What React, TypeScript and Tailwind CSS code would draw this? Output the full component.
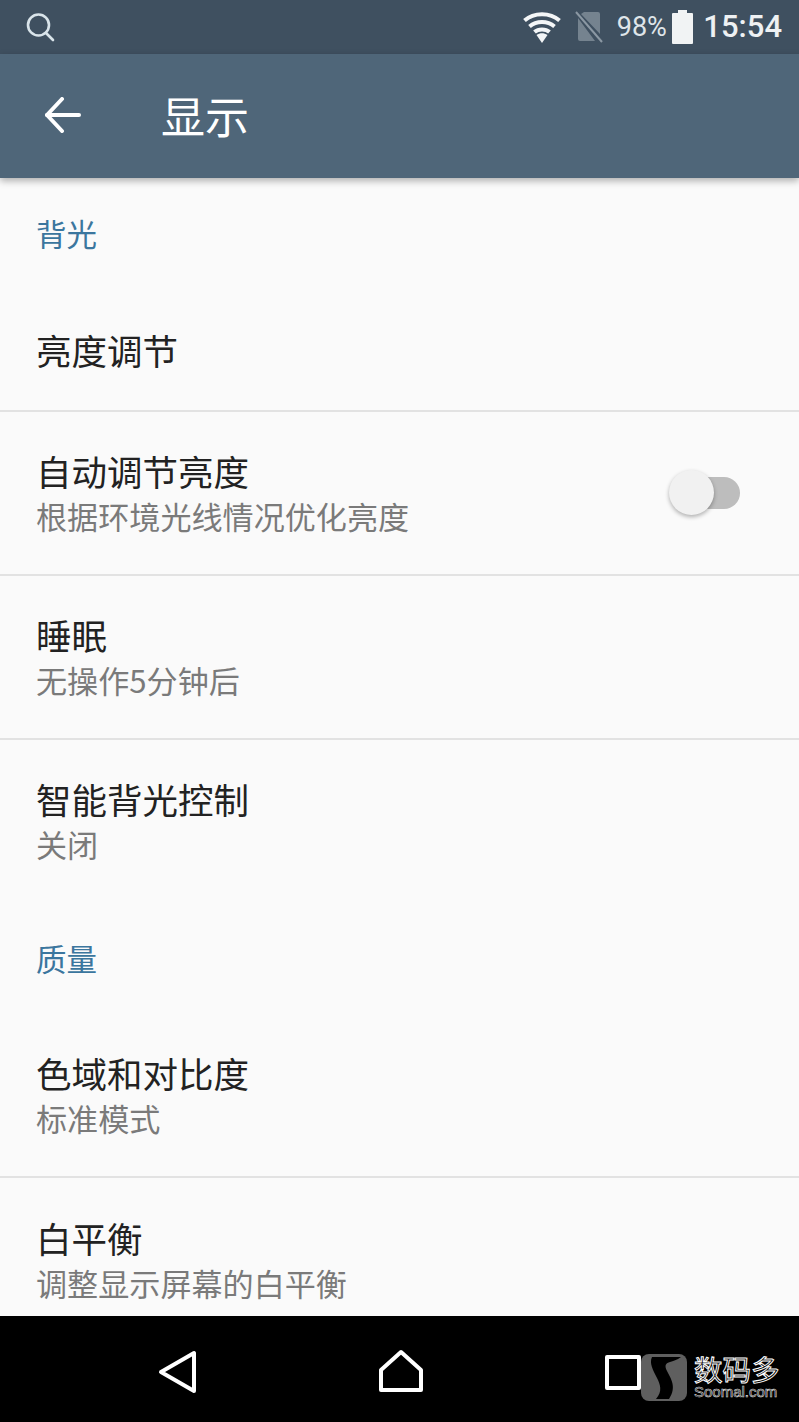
import React from "react";

const cjk = "font-['Noto_Sans_CJK_SC','Noto_Sans',sans-serif]";

function Row({ title, sub, h, border, children }: { title: string; sub?: string; h: string; border?: boolean; children?: React.ReactNode }) {
  return (
    <div className={`${h} ${border ? "border-b-2 border-[#e2e2e2]" : ""} flex items-center justify-between pl-[36px] pr-[59px]`}>
      <div className="flex flex-col">
        <div className="text-[35.5px] leading-[46px] text-[#222222]">{title}</div>
        {sub && <div className="text-[31.1px] leading-[44px] text-[#7a7a7a]">{sub}</div>}
      </div>
      {children}
    </div>
  );
}

function Header({ text, h }: { text: string; h: string }) {
  return (
    <div className={`${h} flex items-center pl-[36px] text-[30.5px] leading-[40px] text-[#3b769e]`}>{text}</div>
  );
}

export default function App() {
  return (
    <div className={`w-[799px] h-[1422px] flex flex-col overflow-hidden bg-[#fafafa] ${cjk}`}>
      <div className="h-[54px] shrink-0 bg-[#3f5060] flex items-center justify-between pl-[25px] pr-[17px]">
        <svg width="30" height="30" viewBox="0 0 30 30" fill="none" stroke="#d9e4ea" strokeWidth="2.6" strokeLinecap="round">
          <circle cx="13.5" cy="13" r="10.5" />
          <path d="M21 21l7 7" />
        </svg>
        <div className="flex items-center">
          <svg width="38" height="32" viewBox="0 0 38 32" className="mr-[14px]" fill="none" stroke="#f4f6f7" strokeWidth="4">
            <path d="M1.500 9.500C11 1 27 1 36.500 9.500" />
            <path d="M6.500 15.500C13.500 9.500 24.500 9.500 31.500 15.500" />
            <path d="M11.500 21C15.500 17.500 22.500 17.500 26.500 21" />
            <path d="M13.500 24C17 21.500 21 21.500 24.500 24L19 32z" fill="#f4f6f7" stroke="none" />
          </svg>
          <svg width="30" height="32" viewBox="0 0 30 32" className="mr-[12px]">
            <path d="M9 1h14a2 2 0 0 1 2 2v20L6 3zM3 7l17 23H5a2 2 0 0 1-2-2z" fill="#75838f" />
            <path d="M1 1l26 30" stroke="#8b98a3" strokeWidth="2" />
          </svg>
          <span className="font-['Roboto',sans-serif] text-[27px] leading-[32px] text-[#dfe5e9] mr-[5.500px]">98%</span>
          <svg width="21" height="34" viewBox="0 0 21 34" className="mr-[10px]">
            <path d="M6 3V0h9v3h5a1 1 0 0 1 1 1v29a1 1 0 0 1-1 1H1a1 1 0 0 1-1-1V4a1 1 0 0 1 1-1z" fill="#f1f3f4" />
          </svg>
          <span className="font-['Roboto',sans-serif] font-medium text-[31px] leading-[34px] text-[#eef1f3]">15:54</span>
        </div>
      </div>

      <div className="h-[124px] shrink-0 bg-[#4f6679] shadow-[0_3px_7px_rgba(0,0,0,0.3)] relative flex items-center pl-[44px]">
        <svg width="38" height="36" viewBox="0 0 38 36" fill="none" stroke="#ffffff" strokeWidth="4" strokeLinecap="round" strokeLinejoin="round" className="mt-[-2px]">
          <path d="M35 18H3" />
          <path d="M18 2L3 18l15 16" />
        </svg>
        <div className="ml-[79px] text-[44px] leading-[56px] text-white mt-[-3px]">显示</div>
      </div>

      <div className="flex-1 min-h-0 overflow-hidden bg-[#fafafa]">
        <Header text="背光" h="h-[112px] pb-[2px]" />
        <Row title="亮度调节" h="h-[122px]" border />
        <Row title="自动调节亮度" sub="根据环境光线情况优化亮度" h="h-[164px]" border>
          <div className="relative w-[70px] h-[32px] rounded-full bg-[#bdbdbd]">
            <div className="absolute left-[-1px] top-[-7px] w-[45px] h-[45px] rounded-full bg-[#f1f1f1] shadow-[0_2px_4px_rgba(0,0,0,0.3)]" />
          </div>
        </Row>
        <Row title="睡眠" sub="无操作5分钟后" h="h-[164px]" border />
        <Row title="智能背光控制" sub="关闭" h="h-[162px]" />
        <Header text="质量" h="h-[112px]" />
        <Row title="色域和对比度" sub="标准模式" h="h-[164px]" border />
        <Row title="白平衡" sub="调整显示屏幕的白平衡" h="h-[164px]" />
      </div>

      <div className="h-[106px] shrink-0 bg-black relative flex items-center pl-[158px]">
        <svg width="40" height="44" viewBox="0 0 40 44" fill="none" stroke="#ffffff" strokeWidth="4" strokeLinejoin="round" className="mt-[6px]">
          <path d="M36 3v38L3 22z" />
        </svg>
        <svg width="44" height="44" viewBox="0 0 44 44" fill="none" stroke="#ffffff" strokeWidth="4" strokeLinejoin="round" className="ml-[181px] mt-[4px]">
          <path d="M22 3L42 21v20H2V21z" />
        </svg>
        <div className="ml-[182px] mt-[7px] w-[36px] h-[35px] border-4 border-white rounded-[2px]" />
        <div className="absolute left-[641px] top-[38px] w-[46px] h-[47px] rounded-[8px] bg-[#5f5f5f] overflow-hidden">
          <svg width="46" height="47" viewBox="0 0 46 47">
            <path d="M11 3H40C36 6 32 7 29 8c-4 1-6 3-3 9 4 8 10 16 2 28H15c7-8 4-15 1-21C12 16 8 9 11 3z" fill="#000000" />
          </svg>
        </div>
        <div className="absolute left-[694px] top-[36px] flex flex-col items-start">
          <span className="text-[28.5px] leading-[33px] text-transparent [-webkit-text-stroke:1px_#ffffff]">数码多</span>
          <span className="font-['Liberation_Sans',sans-serif] text-[15px] leading-[14px] text-transparent [-webkit-text-stroke:0.6px_#dddddd]">Soomal.com</span>
        </div>
      </div>
    </div>
  );
}
